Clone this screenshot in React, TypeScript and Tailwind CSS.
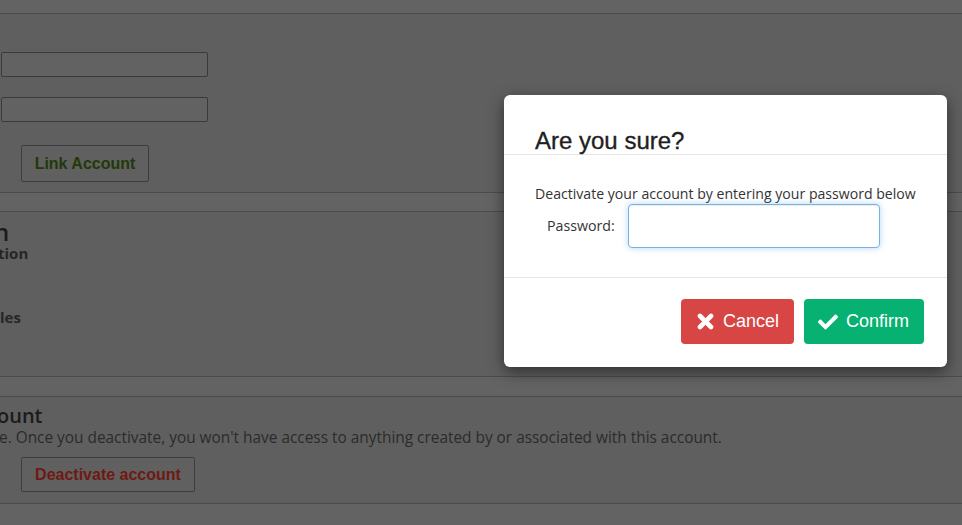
import * as React from 'react';
import { FaCheck } from 'react-icons/fa';

const sans = "font-['Open_Sans',sans-serif]";
const arial = "font-['Liberation_Sans',Arial,sans-serif]";

function TimesIcon() {
  return (
    <svg width="17" height="17" viewBox="0 0 17 17" aria-hidden="true">
      <path d="M3 3 L14 14 M14 3 L3 14" stroke="currentColor" strokeWidth="4.6" strokeLinecap="round" />
    </svg>
  );
}

// Dimmed settings page sitting behind the modal backdrop
function SettingsBackdrop() {
  return (
    <div className={`min-h-[525px] w-full overflow-hidden bg-[#636363] ${sans}`}>
      <div className="h-[13px]" />

      {/* Linked account section */}
      <section className="border-y border-[#4b4b4b] bg-[#5f5f5f] pt-[38px] pb-[10px]">
        <input
          readOnly
          className="ml-[1px] block h-[25px] w-[207px] rounded-[2px] border border-[#3a3a3a] bg-[#626262]"
        />
        <input
          readOnly
          className="mt-[20px] ml-[1px] block h-[25px] w-[207px] rounded-[2px] border border-[#3a3a3a] bg-[#626262]"
        />
        <button
          className={`mt-[23px] ml-[21px] flex h-[37px] w-[128px] items-center justify-center rounded-[2px] border border-[#3d3d3d] bg-[#606060] text-[16px] font-bold text-[#22390b] ${arial}`}
        >
          Link Account
        </button>
      </section>

      <div className="h-[18px]" />

      {/* Permissions section (scrolled off to the left) */}
      <section className="border-y border-[#4b4b4b] bg-[#5f5f5f] pt-[8px] pb-[50px]">
        <h2 className="-ml-[6px] text-[24px] font-semibold leading-[24px] text-[#1b1b1b]">n</h2>
        <p className="-ml-[2px] text-[15px] font-bold leading-[18px] text-[#262626]">tion</p>
        <p className="mt-[46px] text-[15px] font-bold leading-[18px] text-[#262626]">les</p>
      </section>

      <div className="h-[19px]" />

      {/* Deactivate section */}
      <section className="border-y border-[#4b4b4b] bg-[#5f5f5f] pt-[7px] pb-[11px]">
        <h2 className="-ml-[3px] text-[20px] font-semibold leading-[24px] text-[#1b1b1b]">ount</h2>
        <p className="-ml-[1px] text-[15.4px] leading-[20px] text-[#2b2b2b]">
          e. Once you deactivate, you won't have access to anything created by or associated with this account.
        </p>
        <button
          className={`mt-[9px] ml-[21px] flex h-[35px] w-[174px] items-center justify-center rounded-[2px] border border-[#3d3d3d] bg-[#606060] text-[16px] font-bold text-[#6e1a12] ${arial}`}
        >
          Deactivate account
        </button>
      </section>
    </div>
  );
}

function ConfirmModal() {
  const [password, setPassword] = React.useState('');

  return (
    <div className="absolute left-[504px] top-[95px] w-[443px] rounded-[6px] bg-white shadow-[0_5px_15px_rgba(0,0,0,0.5)]">
      {/* Header */}
      <div className="border-b border-[#e5e5e5] pt-[33px] pl-[31px]">
        <h3 className={`text-[24px] leading-[26px] text-[#1f1f1f] [-webkit-text-stroke:0.35px_#1f1f1f] ${arial}`}>
          Are you sure?
        </h3>
      </div>

      {/* Body */}
      <div className={`pt-[29px] pb-[29px] pl-[31px] ${sans}`}>
        <p className="text-[14.1px] leading-[20px] text-[#333]">
          Deactivate your account by entering your password below
        </p>
        <div className="flex items-center">
          <label className="ml-[12px] w-[81px] text-[14.2px] text-[#333]">Password:</label>
          <input
            type="password"
            value={password}
            onChange={(e) => setPassword(e.target.value)}
            className="h-[44px] w-[252px] rounded-[4px] border border-[#76b2e6] bg-white px-3 outline-none shadow-[inset_0_1px_1px_rgba(0,0,0,0.075),0_0_6px_rgba(102,175,233,0.5)]"
          />
        </div>
      </div>

      {/* Footer */}
      <div className={`flex justify-end gap-[10px] border-t border-[#e5e5e5] pt-[21px] pr-[23px] pb-[23px] ${arial}`}>
        <button className="flex h-[45px] w-[113px] items-center gap-[9px] rounded-[4px] bg-[#d74644] pl-[16px] text-[18px] text-white">
          <TimesIcon />
          Cancel
        </button>
        <button className="flex h-[45px] w-[120px] items-center gap-[8px] rounded-[4px] bg-[#07b172] pl-[14px] text-[18px] text-white">
          <FaCheck size={20} />
          Confirm
        </button>
      </div>
    </div>
  );
}

export default function App() {
  return (
    <div className="relative h-[525px] w-[962px] overflow-hidden">
      <SettingsBackdrop />
      <ConfirmModal />
    </div>
  );
}
